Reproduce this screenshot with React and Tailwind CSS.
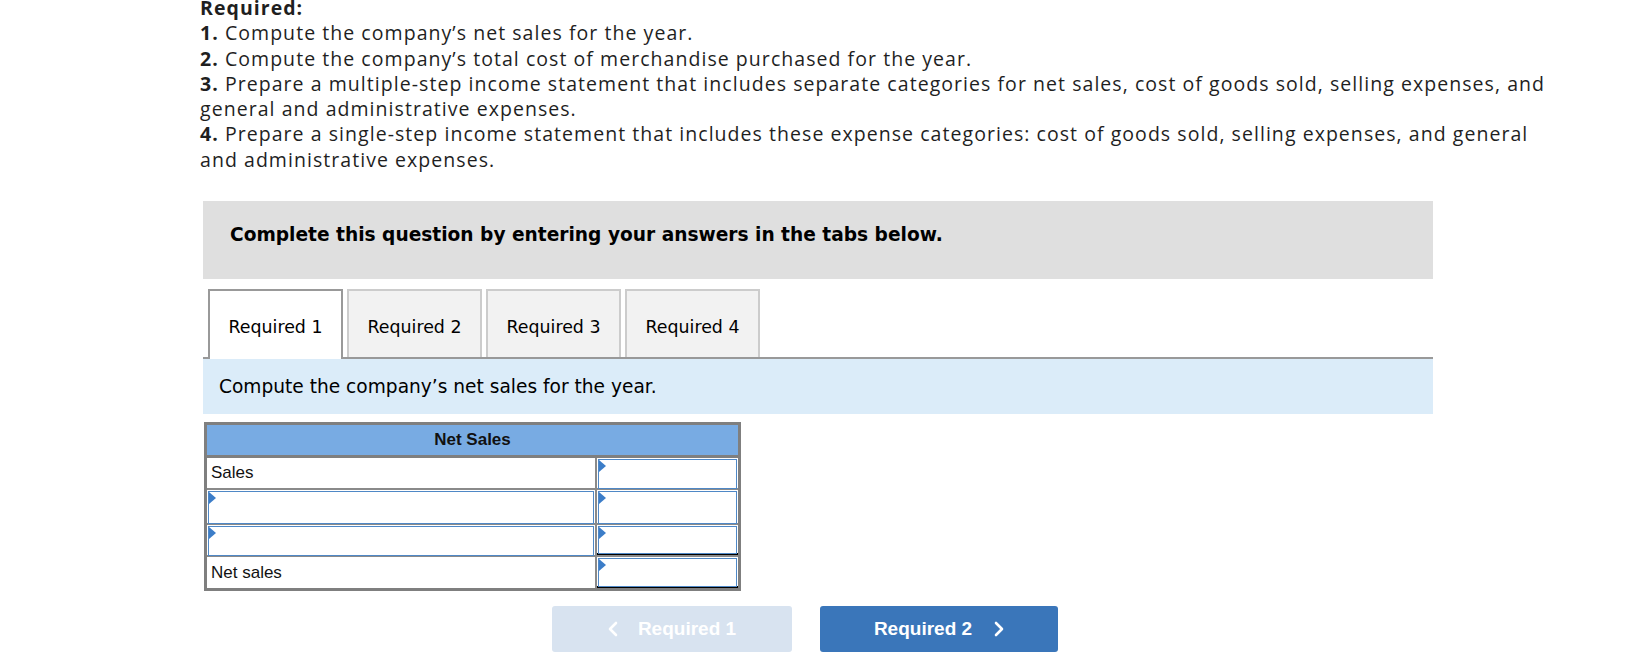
import React, { useState } from 'react';

const tabs = ['Required 1', 'Required 2', 'Required 3', 'Required 4'];

function Marker() {
  return (
    <svg className="absolute left-0 top-0" width="7" height="12" viewBox="0 0 7 12">
      <path d="M0 0 L7 6 L0 12 Z" fill="#3c7dc8" />
    </svg>
  );
}

function InputCell({ className = '' }) {
  return (
    <div className={`relative h-full border border-[#4f88c6] bg-white m-[1px] ${className}`}>
      <Marker />
    </div>
  );
}

function Chevron({ left }) {
  return (
    <svg width="10" height="16" viewBox="0 0 10 16">
      <path
        d={left ? 'M8 2 L2 8 L8 14' : 'M2 2 L8 8 L2 14'}
        fill="none"
        stroke="white"
        strokeWidth="2.6"
        strokeLinecap="round"
        strokeLinejoin="round"
      />
    </svg>
  );
}

export default function App() {
  const [active, setActive] = useState(0);

  return (
    <div className="min-h-[663px] bg-white overflow-hidden">
      <div className="pl-[200px] -mt-[5px] text-[19.5px] leading-[25.3px] tracking-[1.05px] text-[#1f1f1f] font-['Open_Sans','Lato',sans-serif] whitespace-nowrap">
        <div className="font-bold">Required:</div>
        <div><b>1.</b> Compute the company’s net sales for the year.</div>
        <div><b>2.</b> Compute the company’s total cost of merchandise purchased for the year.</div>
        <div><b>3.</b> Prepare a multiple-step income statement that includes separate categories for net sales, cost of goods sold, selling expenses, and</div>
        <div>general and administrative expenses.</div>
        <div><b>4.</b> Prepare a single-step income statement that includes these expense categories: cost of goods sold, selling expenses, and general</div>
        <div>and administrative expenses.</div>
      </div>

      <div className="ml-[203px] w-[1230px] font-['DejaVu_Sans','Verdana',sans-serif]">
        <div className="mt-[29px] h-[78px] bg-[#dfdfdf] pl-[27px] pt-[22px] leading-[24px] text-[18.6px] font-bold text-black">
          Complete this question by entering your answers in the tabs below.
        </div>

        <div className="mt-[10px] pl-[5px] flex items-start gap-[4px] h-[70px] -mb-[2px] relative z-10">
          {tabs.map((t, i) => (
            <button
              key={t}
              onClick={() => setActive(i)}
              className={
                i === active
                  ? 'w-[135px] h-[70px] pt-[4px] bg-white border-2 border-b-0 border-[#999999] text-[17.4px] text-black'
                  : 'w-[135px] h-[68px] pt-[6px] bg-[#f2f2f2] border-2 border-b-0 border-[#cccccc] text-[17.4px] text-black'
              }
            >
              {t}
            </button>
          ))}
        </div>

        <div className="border-t-2 border-[#999999] h-[57px] bg-[#dbecf9] flex items-center pl-[16px] text-[18.6px] text-black">
          Compute the company’s net sales for the year.
        </div>

        <div className="ml-[1px] mt-[8px] w-[537px] border-[3px] border-[#7f7f7f] font-['Liberation_Sans','Arial',sans-serif] text-[17px] text-[#111]">
          <div className="h-[33px] bg-[#78abe3] flex items-center justify-center font-bold border-b-[3px] border-[#7f7f7f]">
            Net Sales
          </div>
          <div className="flex h-[32px] border-b-2 border-[#8a8a8a]">
            <div className="w-[390px] border-r-2 border-[#8a8a8a] flex items-center pl-[4px] bg-white">Sales</div>
            <div className="flex-1"><InputCell /></div>
          </div>
          <div className="flex h-[35px] border-b-2 border-[#8a8a8a]">
            <div className="w-[390px] border-r-2 border-[#8a8a8a]"><InputCell /></div>
            <div className="flex-1"><InputCell /></div>
          </div>
          <div className="flex h-[32px] border-b-2 border-[#8a8a8a]">
            <div className="w-[390px] border-r-2 border-[#8a8a8a]"><InputCell /></div>
            <div className="flex-1 border-b-2 border-black"><InputCell /></div>
          </div>
          <div className="flex h-[31px]">
            <div className="w-[390px] border-r-2 border-[#8a8a8a] flex items-center pl-[4px] bg-white">Net sales</div>
            <div className="flex-1 border-b-2 border-black"><InputCell /></div>
          </div>
        </div>

        <div className="mt-[15px] ml-[349px] flex gap-[28px] font-['Liberation_Sans','Arial',sans-serif] text-[19px] font-bold text-white">
          <button className="w-[240px] h-[46px] rounded-[3px] bg-[#d8e3f0] flex items-center justify-center gap-[20px]">
            <Chevron left />
            <span>Required 1</span>
          </button>
          <button className="w-[238px] h-[46px] rounded-[3px] bg-[#3a76ba] flex items-center justify-center gap-[22px]">
            <span>Required 2</span>
            <Chevron />
          </button>
        </div>
      </div>
    </div>
  );
}
